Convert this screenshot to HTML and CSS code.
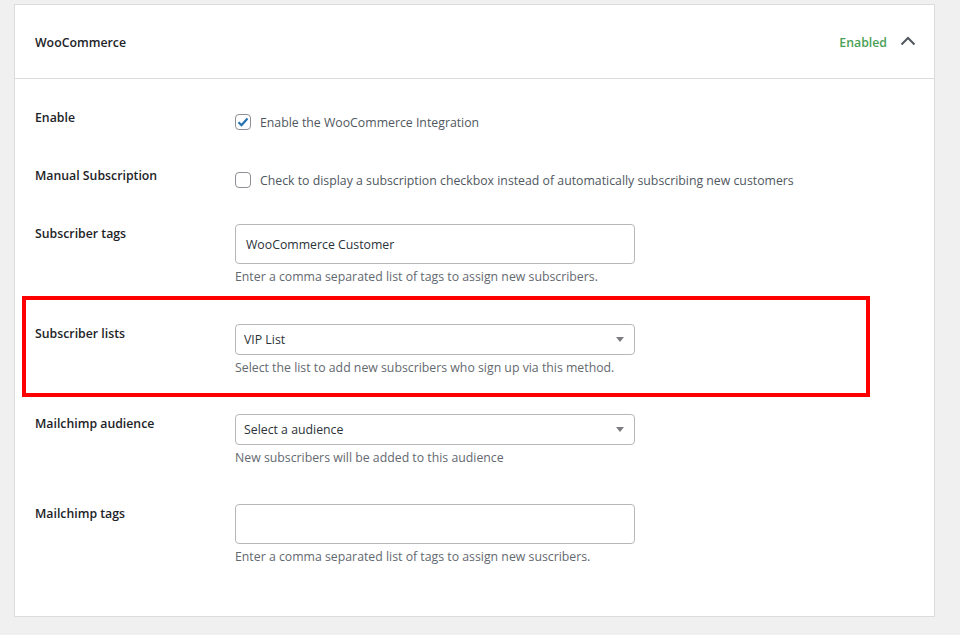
FILE: index.html
```html
<!DOCTYPE html>
<html>
<head>
<meta charset="utf-8">
<link rel="stylesheet" href="styles.css">
</head>
<body>
<div class="panel">
  <div class="panel-head">
    <h2 class="panel-title">WooCommerce</h2>
    <div class="head-right">
      <span class="status">Enabled</span>
      <svg class="chevron" width="16" height="10" viewBox="0 0 16 10"><path d="M1.5 8.5 L8 2 L14.5 8.5" fill="none" stroke="#50575e" stroke-width="2"/></svg>
    </div>
  </div>
  <div class="panel-body">
    <div class="row row-check">
      <div class="label">Enable</div>
      <div class="field">
        <label class="check"><span class="box checked"><svg width="12" height="10" viewBox="0 0 12 10"><path d="M1.5 5.2 L4.5 8.2 L10.5 1.5" fill="none" stroke="#2271b1" stroke-width="2.2"/></svg></span>Enable the WooCommerce Integration</label>
      </div>
    </div>
    <div class="row row-check">
      <div class="label">Manual Subscription</div>
      <div class="field">
        <label class="check"><span class="box"></span>Check to display a subscription checkbox instead of automatically subscribing new customers</label>
      </div>
    </div>
    <div class="row row-tall">
      <div class="label">Subscriber tags</div>
      <div class="field">
        <div class="input">WooCommerce Customer</div>
        <p class="desc">Enter a comma separated list of tags to assign new subscribers.</p>
      </div>
    </div>
    <div class="row row-highlight">
      <div class="label">Subscriber lists</div>
      <div class="field">
        <div class="select">VIP List<span class="arrow"></span></div>
        <p class="desc">Select the list to add new subscribers who sign up via this method.</p>
      </div>
    </div>
    <div class="row">
      <div class="label">Mailchimp audience</div>
      <div class="field">
        <div class="select">Select a audience<span class="arrow"></span></div>
        <p class="desc">New subscribers will be added to this audience</p>
      </div>
    </div>
    <div class="row row-last">
      <div class="label">Mailchimp tags</div>
      <div class="field">
        <div class="input"></div>
        <p class="desc">Enter a comma separated list of tags to assign new suscribers.</p>
      </div>
    </div>
  </div>
</div>
</body>
</html>
```
FILE: styles.css
```css
html, body {
  margin: 0;
  padding: 0;
  background: #f0f0f1;
}
body {
  padding: 4px 0 0 14px;
  font-family: "Open Sans", "Noto Sans", sans-serif;
  font-size: 12.3px;
  color: #2c3338;
}
.panel {
  width: 921px;
  box-sizing: border-box;
  background: #fff;
  border: 1px solid #dcdcde;
}
.panel-head {
  height: 73px;
  box-sizing: content-box;
  border-bottom: 1px solid #dcdcde;
  display: flex;
  align-items: center;
  justify-content: space-between;
  padding: 1px 18px 0 20px;
  height: 72px;
}
.panel-title {
  margin: 0;
  font-size: 12.3px;
  font-weight: 600;
  color: #1d2327;
}
.head-right {
  display: flex;
  align-items: center;
  gap: 13px;
}
.status {
  color: #4a9f58;
  font-weight: 600;
}
.chevron {
  display: block;
  margin-top: -2px;
}
.panel-body {
  padding: 29px 0 50px 0;
}
.row {
  display: flex;
  padding: 0 0 37px 20px;
  position: relative;
}
.row-check {
  padding-bottom: 30px;
}
.row-tall {
  padding-bottom: 38px;
}
.row-last {
  padding-bottom: 0;
}
.label {
  width: 200px;
  flex: none;
  font-weight: 600;
  color: #1d2327;
  line-height: 18px;
  padding-top: 1px;
}
.field {
  width: 400px;
}
.row-check .field {
  width: auto;
}
.check {
  display: flex;
  align-items: center;
  height: 28px;
  color: #50575e;
}
.box {
  width: 16px;
  height: 16px;
  box-sizing: border-box;
  border: 1px solid #8c8f94;
  border-radius: 4px;
  margin-right: 9px;
  display: flex;
  align-items: center;
  justify-content: center;
  background: #fff;
}
.input {
  height: 40px;
  box-sizing: border-box;
  border: 1px solid #b5b7ba;
  border-radius: 4px;
  padding: 0 10px;
  display: flex;
  align-items: center;
  color: #2c3338;
}
.select {
  height: 31px;
  box-sizing: border-box;
  border: 1px solid #b5b7ba;
  border-radius: 4px;
  padding: 0 8px;
  display: flex;
  align-items: center;
  justify-content: space-between;
  color: #2c3338;
}
.arrow {
  width: 0;
  height: 0;
  border-left: 4px solid transparent;
  border-right: 4px solid transparent;
  border-top: 5px solid #7a7c80;
  margin-right: 2px;
}
.desc {
  margin: 4px 0 0 0;
  line-height: 18px;
  color: #646970;
  white-space: nowrap;
}
.row-highlight::after {
  content: "";
  position: absolute;
  left: 7px;
  top: -28px;
  width: 848px;
  height: 101px;
  box-sizing: border-box;
  border: 4px solid #ff0000;
  pointer-events: none;
}
```
